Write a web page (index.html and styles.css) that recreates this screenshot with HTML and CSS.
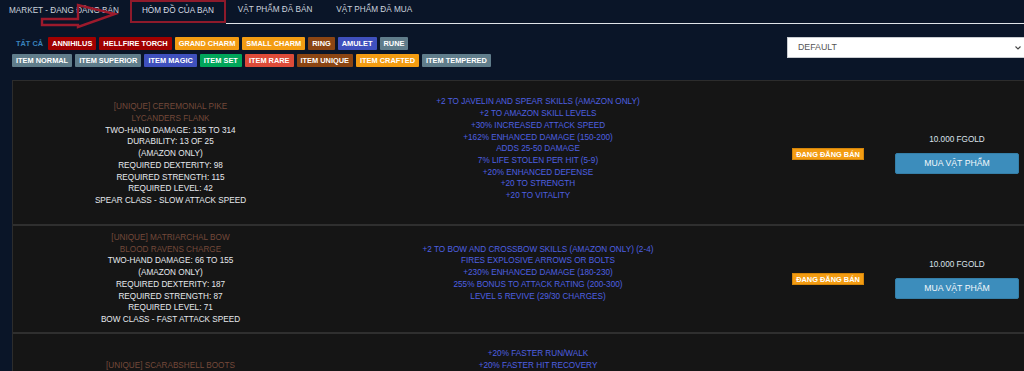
FILE: index.html
```html
<!DOCTYPE html>
<html lang="vi">
<head>
<meta charset="utf-8">
<title>Market</title>
<link rel="stylesheet" href="styles.css">
</head>
<body>
<div class="page">
  <nav class="tabs">
    <a class="tab tab-first">MARKET - ĐANG ĐĂNG BÁN</a>
    <a class="tab tab-active">HÒM ĐỒ CỦA BẠN</a>
    <div class="tabs-rest">
      <a class="tab">VẬT PHẨM ĐÃ BÁN</a>
      <a class="tab">VẬT PHẨM ĐÃ MUA</a>
    </div>
  </nav>
  <svg class="arrow" width="130" height="30" viewBox="0 0 130 30">
    <polygon points="42,19 78,19 78,5 115,14 78,27 78,25 42,25" fill="none" stroke="#9c1a2c" stroke-width="2.4" stroke-linejoin="miter"/>
  </svg>

  <div class="toolbar">
    <div class="filters">
      <div class="tag-row">
        <span class="tag tag-all">TẤT CẢ</span>
        <span class="tag c-darkred">ANNIHILUS</span>
        <span class="tag c-darkred">HELLFIRE TORCH</span>
        <span class="tag c-orange">GRAND CHARM</span>
        <span class="tag c-orange">SMALL CHARM</span>
        <span class="tag c-brown">RING</span>
        <span class="tag c-blue">AMULET</span>
        <span class="tag c-gray">RUNE</span>
      </div>
      <div class="tag-row">
        <span class="tag c-gray">ITEM NORMAL</span>
        <span class="tag c-gray">ITEM SUPERIOR</span>
        <span class="tag c-blue">ITEM MAGIC</span>
        <span class="tag c-green">ITEM SET</span>
        <span class="tag c-red">ITEM RARE</span>
        <span class="tag c-brown">ITEM UNIQUE</span>
        <span class="tag c-orange">ITEM CRAFTED</span>
        <span class="tag c-gray">ITEM TEMPERED</span>
      </div>
    </div>
    <div class="select">
      <span>DEFAULT</span>
      <svg class="chev" width="6" height="4" viewBox="0 0 6 4"><path d="M0.5 0.5 L3 3 L5.5 0.5" fill="none" stroke="#444" stroke-width="1.1"/></svg>
    </div>
  </div>

  <div class="table">
    <div class="row row-1">
      <div class="cell info">
        <div class="title">[UNIQUE] CEREMONIAL PIKE</div>
        <div class="title">LYCANDERS FLANK</div>
        <div>TWO-HAND DAMAGE: 135 TO 314</div>
        <div>DURABILITY: 13 OF 25</div>
        <div>(AMAZON ONLY)</div>
        <div>REQUIRED DEXTERITY: 98</div>
        <div>REQUIRED STRENGTH: 115</div>
        <div>REQUIRED LEVEL: 42</div>
        <div>SPEAR CLASS - SLOW ATTACK SPEED</div>
      </div>
      <div class="cell mods">
        <div>+2 TO JAVELIN AND SPEAR SKILLS (AMAZON ONLY)</div>
        <div>+2 TO AMAZON SKILL LEVELS</div>
        <div>+30% INCREASED ATTACK SPEED</div>
        <div>+162% ENHANCED DAMAGE (150-200)</div>
        <div>ADDS 25-50 DAMAGE</div>
        <div>7% LIFE STOLEN PER HIT (5-9)</div>
        <div>+20% ENHANCED DEFENSE</div>
        <div>+20 TO STRENGTH</div>
        <div>+20 TO VITALITY</div>
      </div>
      <div class="cell status"><span class="badge">ĐANG ĐĂNG BÁN</span></div>
      <div class="cell buy">
        <div class="price">10.000 FGOLD</div>
        <button class="btn">MUA VẬT PHẨM</button>
      </div>
    </div>

    <div class="row row-2">
      <div class="cell info">
        <div class="title">[UNIQUE] MATRIARCHAL BOW</div>
        <div class="title">BLOOD RAVENS CHARGE</div>
        <div>TWO-HAND DAMAGE: 66 TO 155</div>
        <div>(AMAZON ONLY)</div>
        <div>REQUIRED DEXTERITY: 187</div>
        <div>REQUIRED STRENGTH: 87</div>
        <div>REQUIRED LEVEL: 71</div>
        <div>BOW CLASS - FAST ATTACK SPEED</div>
      </div>
      <div class="cell mods">
        <div>+2 TO BOW AND CROSSBOW SKILLS (AMAZON ONLY) (2-4)</div>
        <div>FIRES EXPLOSIVE ARROWS OR BOLTS</div>
        <div>+230% ENHANCED DAMAGE (180-230)</div>
        <div>255% BONUS TO ATTACK RATING (200-300)</div>
        <div>LEVEL 5 REVIVE (29/30 CHARGES)</div>
      </div>
      <div class="cell status"><span class="badge">ĐANG ĐĂNG BÁN</span></div>
      <div class="cell buy">
        <div class="price">10.000 FGOLD</div>
        <button class="btn">MUA VẬT PHẨM</button>
      </div>
    </div>

    <div class="row row-3">
      <div class="cell info">
        <div class="title">[UNIQUE] SCARABSHELL BOOTS</div>
        <div class="title">SANDSTORM TREK</div>
        <div>DEFENSE: 158</div>
        <div>DURABILITY: 14 OF 14</div>
        <div>REQUIRED STRENGTH: 91</div>
        <div>REQUIRED LEVEL: 64</div>
      </div>
      <div class="cell mods">
        <div>+20% FASTER RUN/WALK</div>
        <div>+20% FASTER HIT RECOVERY</div>
        <div>+155% ENHANCED DEFENSE (140-170)</div>
        <div>+99 TO STRENGTH (BASED ON CHARACTER LEVEL)</div>
        <div>+99 TO VITALITY (BASED ON CHARACTER LEVEL)</div>
        <div>50% SLOWER STAMINA DRAIN</div>
        <div>POISON RESIST +12% (10-15)</div>
      </div>
      <div class="cell status"><span class="badge">ĐANG ĐĂNG BÁN</span></div>
      <div class="cell buy">
        <div class="price">10.000 FGOLD</div>
        <button class="btn">MUA VẬT PHẨM</button>
      </div>
    </div>
  </div>
</div>
</body>
</html>
```

FILE: styles.css
```css
html, body {
  margin: 0;
  padding: 0;
  height: 100%;
  overflow: hidden;
}

body {
  background: #0a1528;
  font-family: "Liberation Sans", Arial, sans-serif;
  font-size: 8.2px;
  line-height: 1.43;
  color: #e4e8ee;
}

.page {
  position: relative;
  width: 1030px;
}

/* tabs */
.tabs {
  display: flex;
  align-items: flex-end;
}

.tab {
  display: block;
  padding: 4px 12px 7px;
  line-height: 12px;
  font-size: 8.2px;
  color: #cbd3de;
  white-space: nowrap;
}

.tab-first {
  padding-left: 9px;
  padding-right: 11px;
}

.tab-active {
  position: relative;
  color: #d6dce5;
}

.tab-active::after {
  content: "";
  position: absolute;
  left: 0;
  top: -1px;
  right: 0;
  bottom: 1px;
  border: 2.4px solid #8e1a2b;
}

.tabs-rest {
  flex: 1;
  display: flex;
  border-bottom: 1px solid #dfe3e8;
}

.arrow {
  position: absolute;
  left: 0;
  top: 0;
}

/* toolbar */
.toolbar {
  display: flex;
  justify-content: space-between;
  align-items: flex-start;
  margin-top: 13px;
  padding-left: 12px;
}

.filters {
  display: flex;
  flex-direction: column;
  gap: 4px;
}

.tag-row {
  display: flex;
  gap: 3px;
}

.tag {
  display: block;
  height: 13px;
  line-height: 13.5px;
  padding: 0 4px;
  font-size: 7.4px;
  font-weight: bold;
  color: #fff;
  white-space: nowrap;
  border-radius: 1px;
}

.tag-all { color: #3a84bd; padding-right: 2px; }
.c-darkred { background: #a10000; }
.c-orange { background: #f39c12; }
.c-brown { background: #8b4513; }
.c-blue { background: #3f50bd; }
.c-gray { background: #607d8b; }
.c-green { background: #00a65a; }
.c-red { background: #dd4b39; }

.select {
  box-sizing: border-box;
  width: 243px;
  height: 21px;
  background: #fff;
  border: 1px solid #c9ccd1;
  display: flex;
  align-items: center;
  justify-content: space-between;
  padding: 0 8px 0 10px;
  font-size: 8.8px;
  color: #555;
}

/* table */
.table {
  margin-top: 13px;
  margin-left: 12px;
  background: #151515;
  border-top: 1px solid #2c2c2c;
  border-left: 1px solid #2c2c2c;
}

.row {
  box-sizing: border-box;
  display: grid;
  grid-template-columns: 315px 420px 160px minmax(0, 1fr);
  border-bottom: 2px solid #2f2f2f;
  padding: 6px 0;
}

.row-1 { min-height: 145px; padding-top: 9px; padding-bottom: 6px; }
.row-2 { min-height: 107px; }
.row-3 { min-height: 118px; padding-top: 12px; }

.cell {
  display: flex;
  flex-direction: column;
  justify-content: center;
  align-items: center;
  text-align: center;
  white-space: nowrap;
}

.info { color: #e6e9ee; }
.title { color: #74493a; }

.mods {
  color: #4e60e2;
  padding-bottom: 11.7px;
}

.row-1 .mods { padding-bottom: 9.7px; }

.badge {
  display: block;
  height: 12px;
  line-height: 12.5px;
  padding: 0 3px;
  background: #f39c12;
  border: 1px solid #d4850a;
  box-sizing: border-box;
  font-size: 7.4px;
  font-weight: bold;
  color: #fff;
}

.buy {
  padding-right: 24px;
}

.price {
  color: #dce3ec;
  margin-bottom: 7px;
}

.btn {
  flex: none;
  box-sizing: border-box;
  width: 124px;
  height: 21px;
  background: #3c8dbc;
  border: 1px solid #357fa8;
  border-radius: 2px;
  color: #f4f8fb;
  font-family: "Liberation Sans", Arial, sans-serif;
  font-size: 8.7px;
  padding: 0;
}
```
